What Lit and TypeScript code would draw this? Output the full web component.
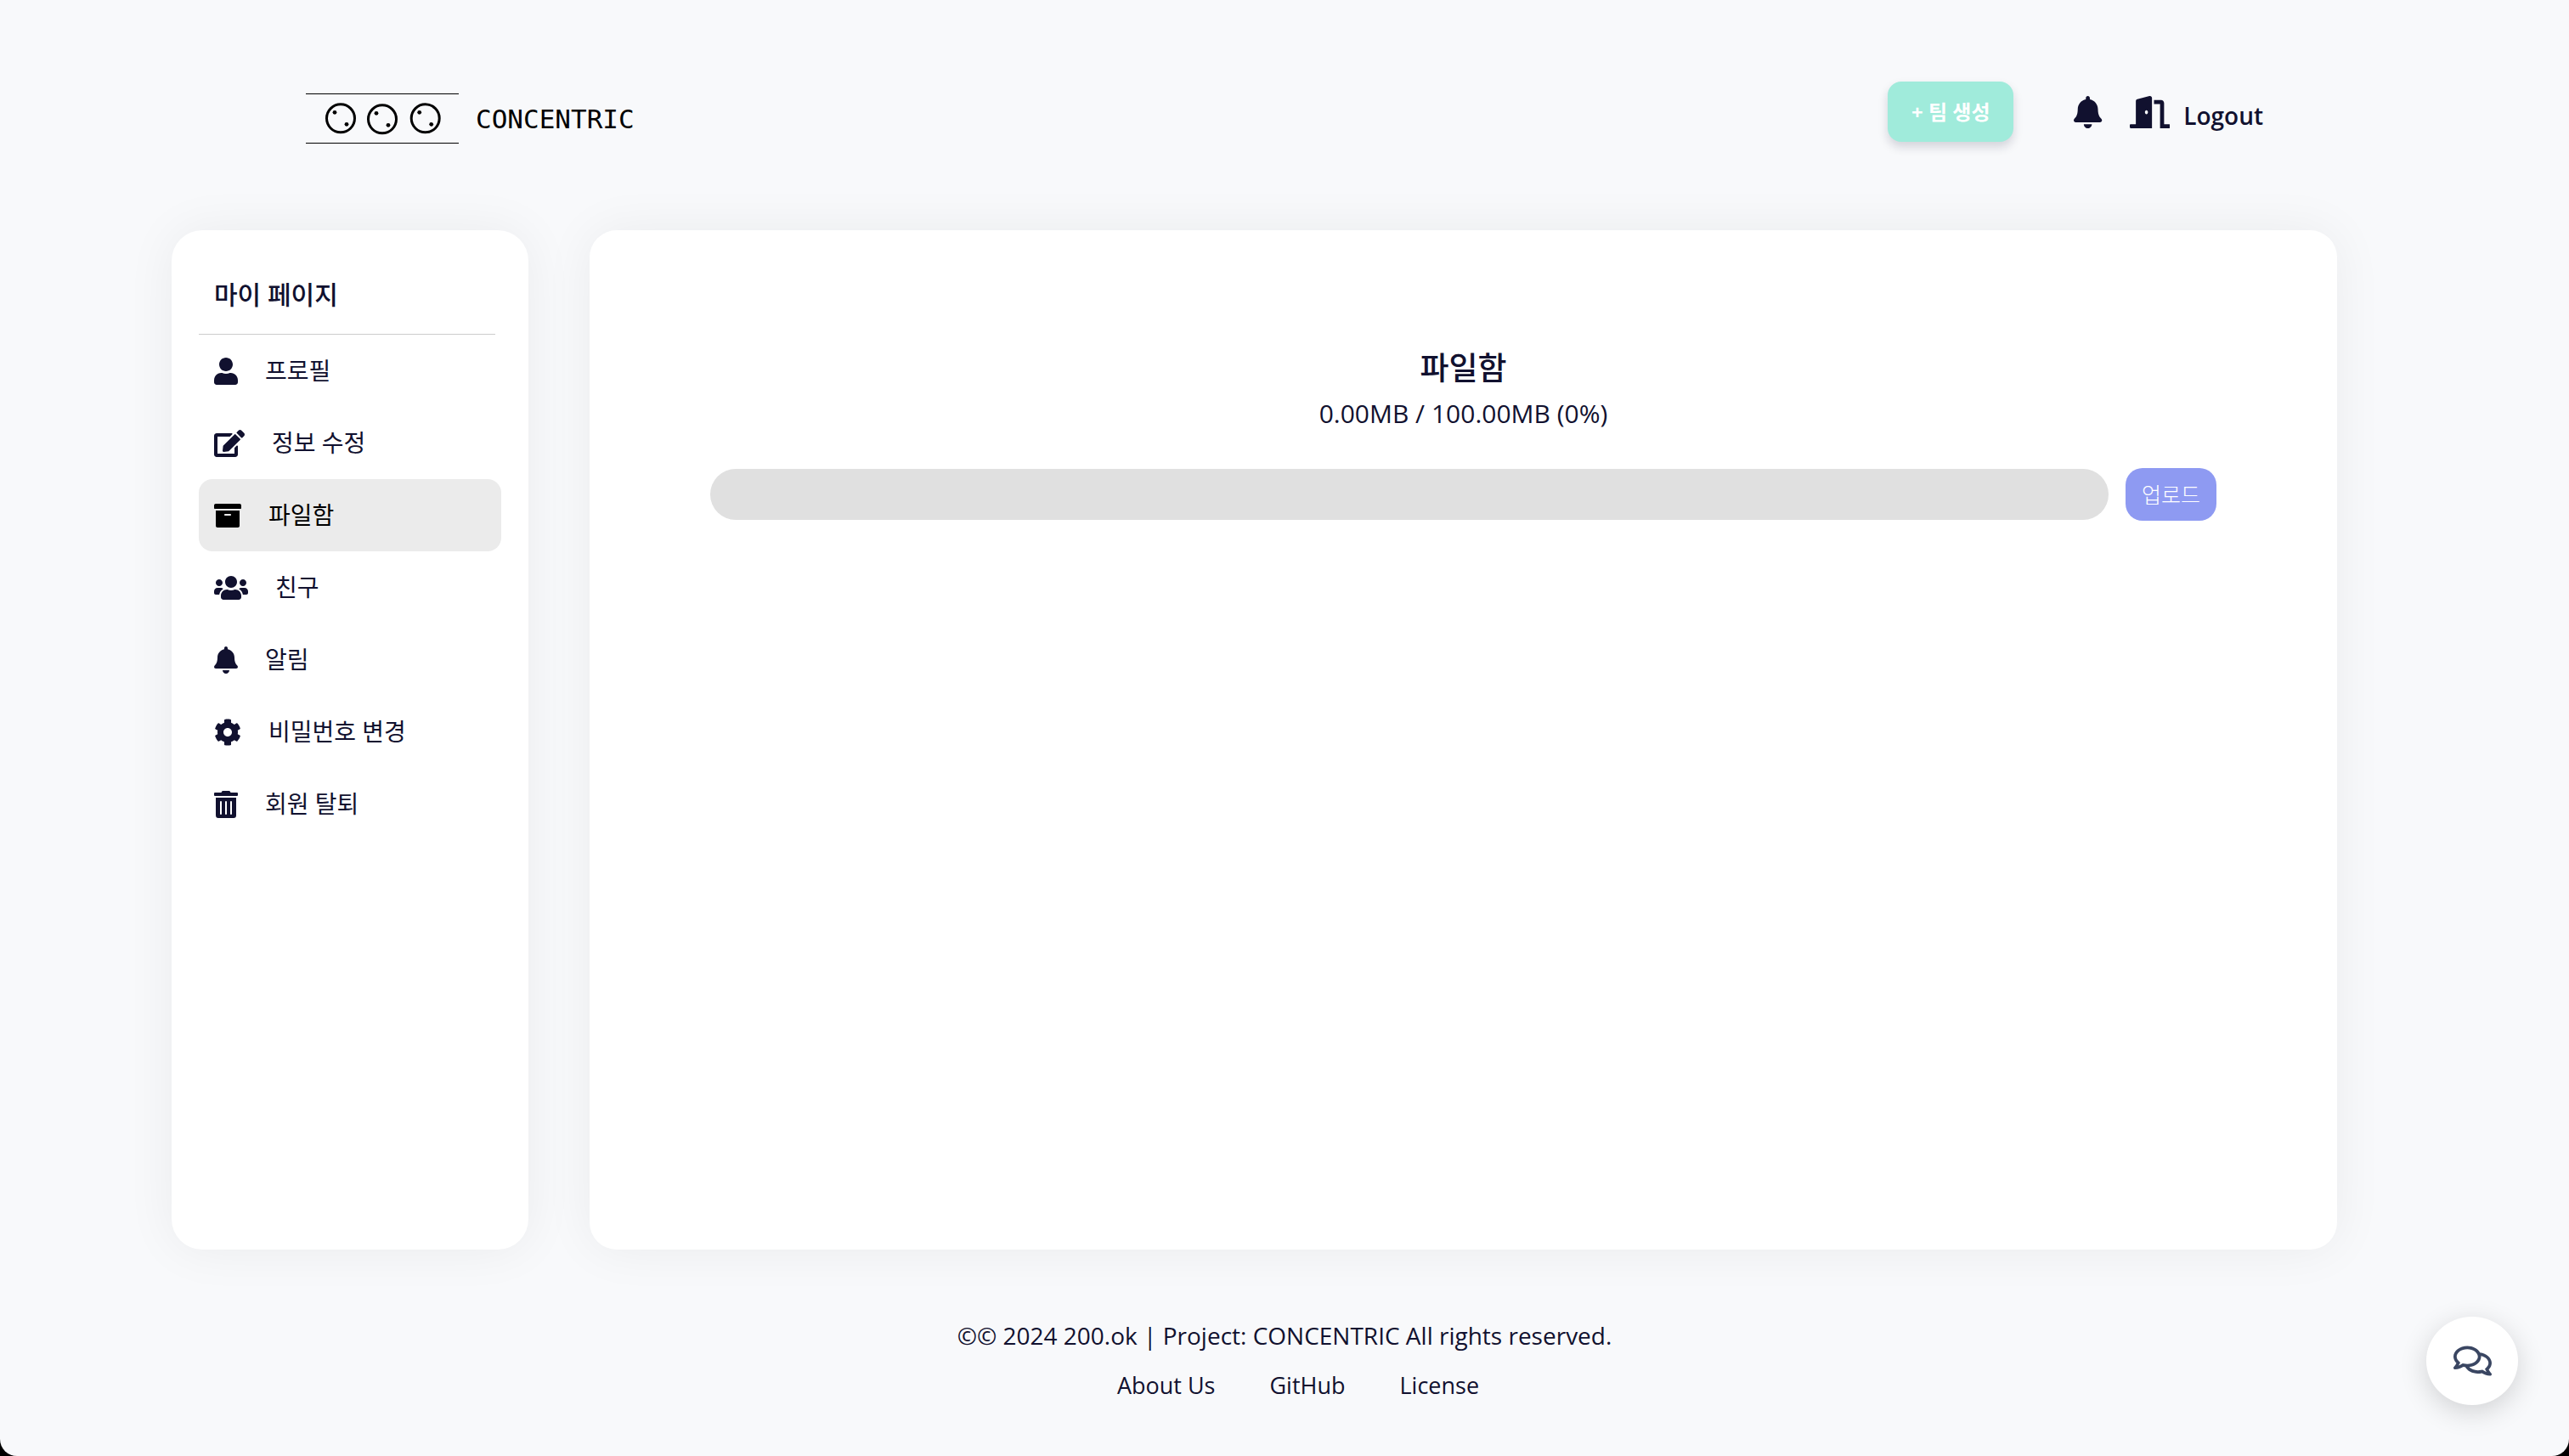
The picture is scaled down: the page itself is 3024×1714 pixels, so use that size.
import { LitElement, html, css, svg } from "lit";
import { customElement, property } from "lit/decorators.js";

interface IconShape {
  width: number;
  path: string;
}

// Solid icon outlines; each one is 512 units high and `width` units wide.
const ICONS: Record<string, IconShape> = {
  user: {
    width: 448,
    path: "M224 256c70.7 0 128-57.3 128-128S294.7 0 224 0 96 57.3 96 128s57.3 128 128 128zm89.6 32h-16.7c-22.2 10.2-46.9 16-72.9 16s-50.6-5.8-72.9-16h-16.7C60.2 288 0 348.2 0 422.4V464c0 26.5 21.5 48 48 48h352c26.5 0 48-21.5 48-48v-41.6c0-74.2-60.2-134.4-134.4-134.4z",
  },
  edit: {
    width: 576,
    path: "M402.6 83.2l90.2 90.2c3.8 3.8 3.8 10 0 13.8L274.4 405.6l-92.8 10.3c-12.4 1.4-22.9-9.1-21.5-21.5l10.3-92.8L388.8 83.2c3.8-3.8 10-3.8 13.8 0zm162-22.9l-48.8-48.8c-15.2-15.2-39.9-15.2-55.2 0l-35.4 35.4c-3.8 3.8-3.8 10 0 13.8l90.2 90.2c3.8 3.8 10 3.8 13.8 0l35.4-35.4c15.2-15.3 15.2-40 0-55.2zM384 346.2V448H64V128h229.8c3.2 0 6.2-1.3 8.5-3.5l40-40c7.6-7.6 2.2-20.5-8.5-20.5H48C21.5 64 0 85.5 0 112v352c0 26.5 21.5 48 48 48h352c26.5 0 48-21.5 48-48V306.2c0-10.7-12.9-16-20.5-8.5l-40 40c-2.2 2.3-3.5 5.3-3.5 8.5z",
  },
  archive: {
    width: 512,
    path: "M32 448c0 17.7 14.3 32 32 32h384c17.7 0 32-14.3 32-32V160H32v288zm160-212c0-6.6 5.4-12 12-12h104c6.6 0 12 5.4 12 12v8c0 6.6-5.4 12-12 12H204c-6.6 0-12-5.4-12-12v-8zM480 32H32C14.3 32 0 46.3 0 64v48c0 8.8 7.2 16 16 16h480c8.8 0 16-7.2 16-16V64c0-17.7-14.3-32-32-32z",
  },
  users: {
    width: 640,
    path: "M96 224c35.3 0 64-28.7 64-64s-28.7-64-64-64-64 28.7-64 64 28.7 64 64 64zm448 0c35.3 0 64-28.7 64-64s-28.7-64-64-64-64 28.7-64 64 28.7 64 64 64zm32 32h-64c-17.6 0-33.5 7.1-45.1 18.6 40.3 22.1 68.9 62 75.1 109.4h66c17.7 0 32-14.3 32-32v-32c0-35.3-28.7-64-64-64zm-256 0c61.9 0 112-50.1 112-112S381.9 32 320 32 208 82.1 208 144s50.1 112 112 112zm76.8 32h-8.3c-20.8 10-43.9 16-68.5 16s-47.6-6-68.5-16h-8.3C179.6 288 128 339.6 128 403.2V432c0 26.5 21.5 48 48 48h288c26.5 0 48-21.5 48-48v-28.8c0-63.6-51.6-115.2-115.2-115.2zm-223.7-13.4C161.5 263.1 145.6 256 128 256H64c-35.3 0-64 28.7-64 64v32c0 17.7 14.3 32 32 32h65.9c6.3-47.4 34.9-87.3 75.2-109.4z",
  },
  bell: {
    width: 448,
    path: "M224 512c35.32 0 63.97-28.65 63.97-64H160.03c0 35.35 28.65 64 63.97 64zm215.39-149.71c-19.32-20.76-55.47-51.99-55.47-154.29 0-77.7-54.48-139.9-127.94-155.16V32c0-17.67-14.32-32-31.98-32s-31.98 14.33-31.98 32v20.84C118.56 68.1 64.08 130.3 64.08 208c0 102.3-36.15 133.53-55.47 154.29-6 6.45-8.66 14.16-8.61 21.71.11 16.4 12.98 32 32.1 32h383.8c19.12 0 32-15.6 32.1-32 .05-7.55-2.61-15.27-8.61-21.71z",
  },
  cog: {
    width: 512,
    path: "M487.4 315.7l-42.6-24.6c4.3-23.2 4.3-47 0-70.2l42.6-24.6c4.9-2.8 7.1-8.6 5.5-14-11.1-35.6-30-67.8-54.7-94.6-3.8-4.1-10-5.1-14.8-2.3L380.8 110c-17.9-15.4-38.5-27.3-60.8-35.1V25.8c0-5.6-3.9-10.5-9.4-11.7-36.7-8.2-74.3-7.8-109.2 0-5.5 1.2-9.4 6.1-9.4 11.7V75c-22.2 7.9-42.8 19.8-60.8 35.1L88.7 85.5c-4.9-2.8-11-1.9-14.8 2.3-24.7 26.7-43.6 58.9-54.7 94.6-1.7 5.4.6 11.2 5.5 14L67.3 221c-4.3 23.2-4.3 47 0 70.2l-42.6 24.6c-4.9 2.8-7.1 8.6-5.5 14 11.1 35.6 30 67.8 54.7 94.6 3.8 4.1 10 5.1 14.8 2.3l42.6-24.6c17.9 15.4 38.5 27.3 60.8 35.1v49.2c0 5.6 3.9 10.5 9.4 11.7 36.7 8.2 74.3 7.8 109.2 0 5.5-1.2 9.4-6.1 9.4-11.7v-49.2c22.2-7.9 42.8-19.8 60.8-35.1l42.6 24.6c4.9 2.8 11 1.9 14.8-2.3 24.7-26.7 43.6-58.9 54.7-94.6 1.5-5.5-.7-11.3-5.6-14.1zM256 336c-44.1 0-80-35.9-80-80s35.9-80 80-80 80 35.9 80 80-35.9 80-80 80z",
  },
  trash: {
    width: 448,
    path: "M32 464a48 48 0 0 0 48 48h288a48 48 0 0 0 48-48V128H32zm272-256a16 16 0 0 1 32 0v224a16 16 0 0 1-32 0zm-96 0a16 16 0 0 1 32 0v224a16 16 0 0 1-32 0zm-96 0a16 16 0 0 1 32 0v224a16 16 0 0 1-32 0zM432 32H312l-9.4-18.7A24 24 0 0 0 281.1 0H166.8a23.72 23.72 0 0 0-21.4 13.3L136 32H16A16 16 0 0 0 0 48v32a16 16 0 0 0 16 16h416a16 16 0 0 0 16-16V48a16 16 0 0 0-16-16z",
  },
  door: {
    width: 640,
    path: "M624 448h-80V113.45C544 86.19 522.47 64 496 64H384v64h96v384h144c8.84 0 16-7.16 16-16v-32c0-8.84-7.16-16-16-16zM312.24 1.01l-192 49.74C105.99 54.44 96 67.7 96 82.92V448H16c-8.84 0-16 7.16-16 16v32c0 8.84 7.16 16 16 16h336V33.18c0-21.58-19.56-37.41-39.76-32.17zM264 288c-13.25 0-24-14.33-24-32s10.75-32 24-32 24 14.33 24 32-10.75 32-24 32z",
  },
  comments: {
    width: 576,
    path: "M532 386.2c27.5-27.1 44-61.1 44-98.2 0-80-76.5-146.1-176.2-157.9C368.3 72.5 294.3 32 208 32 93.1 32 0 103.6 0 192c0 37 16.5 71 44 98.2-15.3 30.7-37.3 54.5-37.7 54.9-6.3 6.7-8.1 16.5-4.4 25 3.6 8.5 12 14 21.2 14 53.5 0 96.7-20.2 125.2-38.8 9.2 2.1 18.7 3.7 28.4 4.9C208.1 407.6 281.8 448 368 448c20.8 0 40.8-2.4 59.8-6.8C456.3 459.7 499.4 480 553 480c9.2 0 17.5-5.5 21.2-14 3.6-8.5 1.9-18.3-4.4-25-.4-.3-22.5-24.1-37.8-54.8zm-392.8-92.3L122.1 305c-14.1 9.1-28.5 16.3-43.1 21.4 2.7-4.7 5.4-9.7 8-14.8l15.5-31.1L77.7 256C64.2 242.6 48 220.7 48 192c0-60.7 73.3-112 160-112s160 51.3 160 112-73.3 112-160 112c-16.5 0-33-1.9-49-5.6l-19.8-4.5zM498.3 352l-24.7 24.4 15.5 31.1c2.6 5.1 5.3 10.1 8 14.8-14.6-5.1-29-12.3-43.1-21.4l-17.1-11.1-19.9 4.6c-16 3.7-32.5 5.6-49 5.6-54 0-102.2-20.1-131.3-49.7C338 339.5 416 272.9 416 192c0-3.4-.4-6.7-.7-10C479.7 196.5 528 238.8 528 288c0 28.7-16.2 50.6-29.7 64z",
  },
};

@customElement("app-icon")
export class AppIcon extends LitElement {
  static styles = css`
    :host {
      display: inline-flex;
      flex: none;
      height: 32px;
    }
    .glyph {
      display: block;
      height: 100%;
      width: auto;
      fill: currentColor;
    }
  `;

  @property() name = "user";

  render() {
    const icon = ICONS[this.name];
    return html`<svg class="glyph" viewBox="0 0 ${icon.width} 512" aria-hidden="true">
      ${svg`<path d=${icon.path}></path>`}
    </svg>`;
  }
}

const MENU = [
  { icon: "user", label: "프로필" },
  { icon: "edit", label: "정보 수정" },
  { icon: "archive", label: "파일함", active: true },
  { icon: "users", label: "친구" },
  { icon: "bell", label: "알림" },
  { icon: "cog", label: "비밀번호 변경" },
  { icon: "trash", label: "회원 탈퇴" },
];

// Ring centres in the logo; each ring carries two small dots.
const RINGS = [
  { x: 41, y: 29.3 },
  { x: 90, y: 30.3 },
  { x: 140.7, y: 29.3 },
];

@customElement("app-root")
export class AppRoot extends LitElement {
  static styles = css`
    :host {
      display: block;
      background: #000;
      color: #11112f;
      font-family: "Open Sans", "Noto Sans CJK KR", sans-serif;
      font-size: 28px;
      line-height: 40px;
    }
    *,
    *::before {
      box-sizing: border-box;
    }
    a {
      color: inherit;
      text-decoration: none;
    }
    button {
      border: 0;
      font-family: inherit;
      cursor: pointer;
    }
    .page {
      display: flex;
      flex-direction: column;
      min-height: 100vh;
      background: #f8f9fb;
      border-radius: 0 0 20px 20px;
    }
    .header {
      display: flex;
      align-items: center;
      justify-content: space-between;
      height: 271px;
      padding: 0 360px 8px;
    }
    .logo {
      display: flex;
      align-items: center;
      gap: 20px;
      padding-top: 17px;
      color: #000;
    }
    .mark {
      display: block;
      width: 180px;
      height: 60px;
    }
    .wordmark {
      font-family: "DejaVu Sans Mono", monospace;
      font-size: 31px;
    }
    .actions {
      display: flex;
      align-items: center;
    }
    .create {
      height: 71px;
      padding: 0 28px 2px;
      border-radius: 16px;
      background: #a0ebdb;
      box-shadow: 0 6px 12px rgba(17, 17, 47, 0.16);
      color: #fff;
      font-size: 24px;
      font-weight: 700;
    }
    .alerts {
      display: flex;
      margin-left: 71px;
      padding: 0;
      background: none;
      color: inherit;
    }
    .logout {
      display: flex;
      align-items: center;
      gap: 16px;
      margin-left: 32px;
      font-weight: 600;
    }
    .large {
      height: 38px;
    }
    .word {
      padding-top: 8px;
    }
    .body {
      display: flex;
      flex: 1;
      gap: 72px;
      padding: 0 273px 0 202px;
    }
    .side,
    .files {
      background: #fff;
      box-shadow: 0 0 60px rgba(0, 0, 0, 0.06);
    }
    .side {
      flex: none;
      width: 420px;
      padding: 48px 32px;
      border-radius: 36px;
    }
    .side-title {
      margin: 0 7px 0 0;
      padding: 6px 18px 25px;
      border-bottom: 1px solid #ccc;
      font-size: 30px;
      line-height: 43px;
      font-weight: 500;
    }
    .menu {
      margin: 0;
      padding: 0;
      list-style: none;
    }
    .item {
      display: flex;
      align-items: center;
      gap: 32px;
      height: 85px;
      padding: 0 18px;
      border-radius: 16px;
    }
    .label {
      padding-bottom: 2px;
    }
    .item.active {
      background: #ebebeb;
      color: #000;
    }
    .files {
      flex: 1;
      display: flex;
      flex-direction: column;
      align-items: center;
      padding: 136px 142px;
      border-radius: 32px;
    }
    .title {
      margin: 0;
      font-size: 37px;
      line-height: 52px;
      font-weight: 500;
    }
    .usage {
      margin: 0;
      font-size: 30px;
      line-height: 56px;
    }
    .quota {
      display: flex;
      align-items: center;
      gap: 20px;
      width: 100%;
      padding-top: 36px;
    }
    .bar {
      flex: 1;
      height: 60px;
      appearance: none;
      border: 0;
      border-radius: 30px;
      background: #e0e0e0;
      overflow: hidden;
    }
    .bar::-webkit-progress-bar {
      background: #e0e0e0;
    }
    .bar::-webkit-progress-value {
      background: #8f9bf3;
    }
    .upload {
      height: 62px;
      padding: 0 19px 2px;
      border-radius: 20px;
      background: #8e9af2;
      color: #fff;
      font-size: 25px;
      font-weight: 300;
    }
    .footer {
      display: flex;
      flex-direction: column;
      align-items: center;
      gap: 19px;
      padding: 81px 0 63px;
    }
    .copy {
      margin: 0;
    }
    .links {
      display: flex;
      gap: 64px;
      padding-left: 32px;
      font-size: 27px;
    }
    .chat {
      position: fixed;
      right: 60px;
      bottom: 60px;
      display: flex;
      align-items: center;
      justify-content: center;
      width: 108px;
      height: 104px;
      padding: 0;
      border-radius: 50%;
      background: #fff;
      box-shadow: 0 8px 32px rgba(0, 0, 0, 0.16);
      color: #3a4662;
    }
    .bubble {
      height: 40px;
    }
  `;

  render() {
    return html`
      <div class="page">
        <header class="header">
          <a class="logo" href="#">
            <svg class="mark" viewBox="0 0 180 60" aria-hidden="true">
              <path d="M0 0.5H180M0 58.5H180" stroke="#000" stroke-width="1.2"></path>
              ${RINGS.map(
                (r) => svg`
                  <circle cx=${r.x} cy=${r.y} r="16.5" fill="none" stroke="#000" stroke-width="3"></circle>
                  <circle cx=${r.x - 7} cy=${r.y - 7} r="2.4"></circle>
                  <circle cx=${r.x + 7} cy=${r.y + 7} r="2.4"></circle>
                `,
              )}
            </svg>
            <span class="wordmark">CONCENTRIC</span>
          </a>
          <div class="actions">
            <button class="create" type="button">+ 팀 생성</button>
            <button class="alerts" type="button" aria-label="알림">
              <app-icon class="large" name="bell"></app-icon>
            </button>
            <a class="logout" href="#">
              <app-icon class="large" name="door"></app-icon>
              <span class="word">Logout</span>
            </a>
          </div>
        </header>
        <div class="body">
          <nav class="side" aria-labelledby="side-title">
            <h2 class="side-title" id="side-title">마이 페이지</h2>
            <ul class="menu">
              ${MENU.map(
                (m) => html`<li>
                  <a class="item ${m.active ? "active" : ""}" href="#">
                    <app-icon name=${m.icon}></app-icon>
                    <span class="label">${m.label}</span>
                  </a>
                </li>`,
              )}
            </ul>
          </nav>
          <main class="files">
            <h1 class="title">파일함</h1>
            <p class="usage" id="usage">0.00MB / 100.00MB (0%)</p>
            <div class="quota">
              <progress class="bar" max="100" value="0" aria-labelledby="usage"></progress>
              <button class="upload" type="button">업로드</button>
            </div>
          </main>
        </div>
        <footer class="footer">
          <p class="copy">©© 2024 200.ok | Project: CONCENTRIC All rights reserved.</p>
          <nav class="links">
            <a href="#">About Us</a>
            <a href="#">GitHub</a>
            <a href="#">License</a>
          </nav>
        </footer>
        <button class="chat" type="button" aria-label="채팅">
          <app-icon class="bubble" name="comments"></app-icon>
        </button>
      </div>
    `;
  }
}
